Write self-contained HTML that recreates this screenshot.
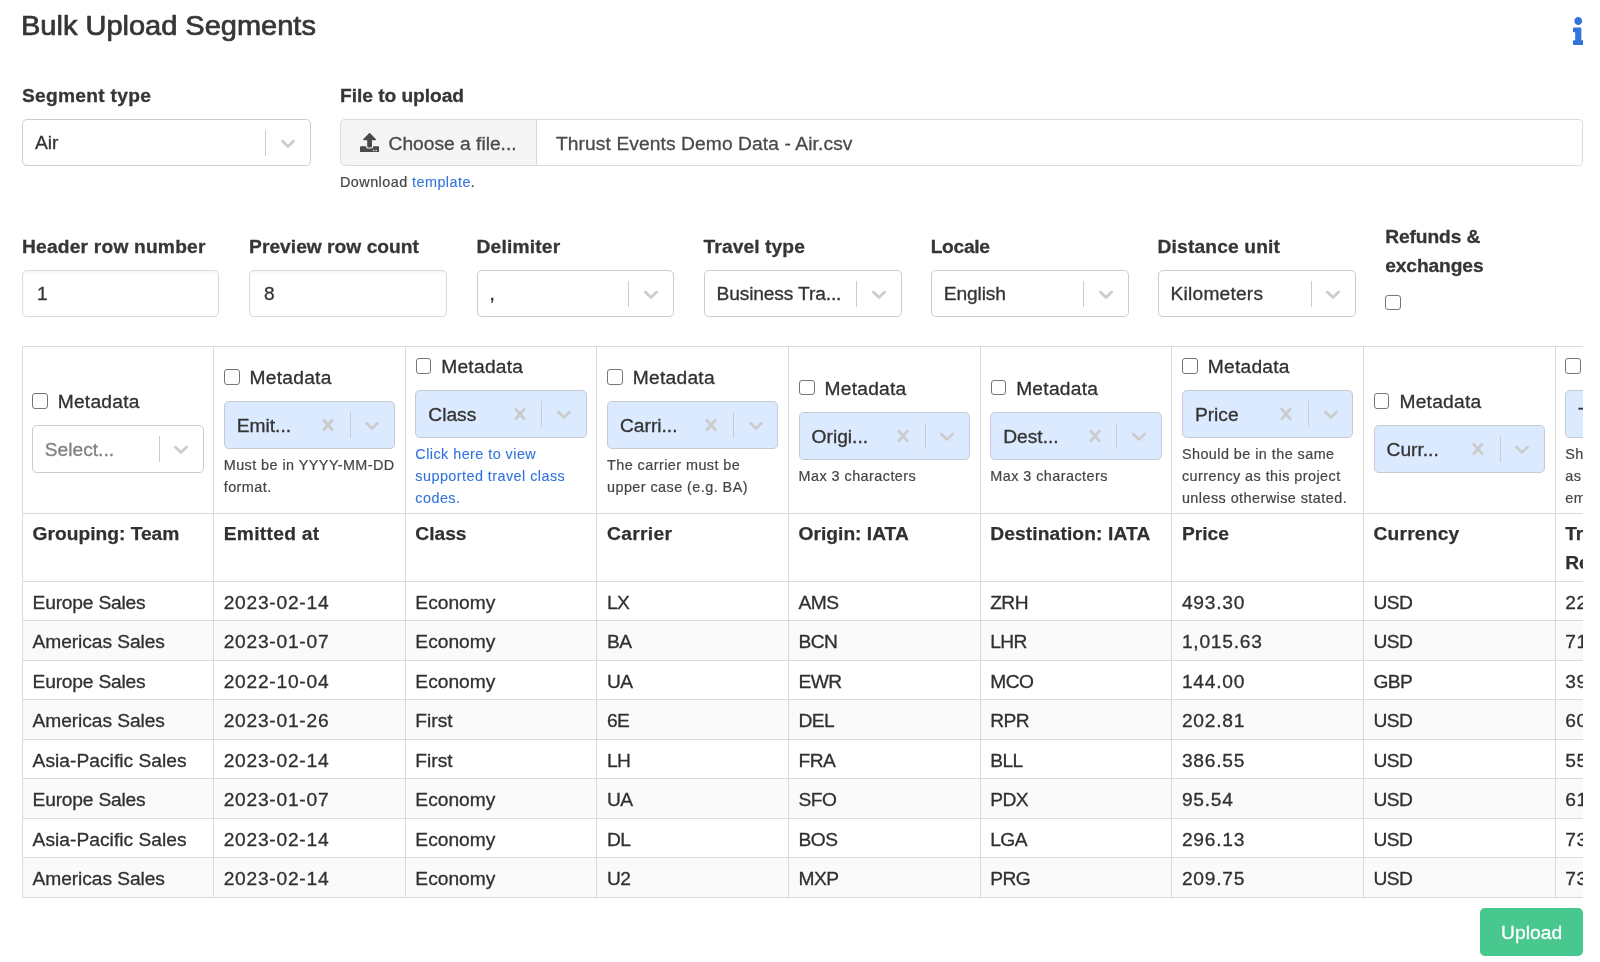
<!DOCTYPE html>
<html lang="en">
<head>
<meta charset="utf-8">
<title>Bulk Upload Segments</title>
<style>
*{box-sizing:border-box;margin:0;padding:0}
html,body{width:1600px;height:962px;overflow:hidden;background:#fff}
body{font-family:"Liberation Sans",Arial,sans-serif;font-size:19.2px;line-height:28.8px;color:#303030;position:relative;-webkit-text-stroke-width:0.3px}
#app{position:absolute;left:0;top:0;width:1600px;height:962px;will-change:transform;background:#fff}
.abs{position:absolute}
h1.title{position:absolute;left:20.9px;top:10.3px;font-size:26.9px;line-height:32.4px;font-weight:400;color:#363636;white-space:nowrap;-webkit-text-stroke:0.7px #363636;transform:scaleX(1.078);transform-origin:0 0}
.info{position:absolute;left:1572.7px;top:17px;width:10.5px;height:28px}
label.lbl{position:absolute;font-weight:700;-webkit-text-stroke:0.3px #363636;color:#363636;white-space:nowrap;line-height:28.8px;letter-spacing:0.1px}
/* react-select-like control */
.sel{position:absolute;height:47px;border:1px solid #ccc;border-radius:4.8px;background:#fff;display:flex;align-items:center}
.sel .val{flex:1;padding-left:12px;position:relative;top:1.3px;white-space:nowrap;overflow:hidden;color:#333}
.sel .ph{color:#808080}
.sel .sep{width:1px;height:26px;background:#ccc;flex:none}
.sel .ind{width:43.2px;height:43.2px;flex:none;display:flex;align-items:center;justify-content:center}
.sel .ind svg{width:24px;height:24px;fill:#ccc;display:block}
.sel.on{background:#dbeafe;border-color:#c6cbd3}
.inp{position:absolute;height:47px;border:1px solid #dbdbdb;border-radius:4.8px;background:#fff;box-shadow:inset 0 1.2px 2.4px rgba(10,10,10,.05);padding-left:14px;line-height:46.2px;color:#363636}
.file{position:absolute;left:340px;top:119px;width:1243.25px;height:47px;display:flex}
.file .cta{width:196.6px;height:47px;background:#f5f5f5;border:1px solid #dbdbdb;border-radius:4.8px 0 0 4.8px;display:flex;align-items:center;padding-left:19.2px;color:#4a4a4a;white-space:nowrap}
.file .cta span{position:relative;top:2px;left:-0.8px}
.file .cta svg{width:19.2px;height:19.2px;fill:#4a4a4a;margin-right:10px;flex:none}
.file .name{flex:1;height:47px;border:1px solid #dbdbdb;border-left:0;border-radius:0 4.8px 4.8px 0;padding-left:19.4px;line-height:47px;letter-spacing:0.1px;color:#4a4a4a;white-space:nowrap}
.help{-webkit-text-stroke-width:0.2px;font-size:14.4px;line-height:21.6px;color:#454545;letter-spacing:0.45px}
a{color:#3273dc;text-decoration:none;-webkit-text-stroke-width:0.1px}
.cb{display:inline-block;width:15.6px;height:15.6px;border:1.2px solid #767676;border-radius:3px;background:#fff;flex:none}
/* table */
.tbl{position:absolute;left:22px;top:346.2px;width:1561.25px;height:553px;overflow:hidden}
.tbl .in{width:1740px;border-left:1px solid #dbdbdb}
.r{display:flex;border-top:1px solid #dbdbdb}
.r:last-child{border-bottom:1px solid #dbdbdb}
.c{width:191.65px;flex:none;border-right:1px solid #dbdbdb;padding:4.8px 9.6px 4.8px 9.6px;white-space:nowrap;overflow:hidden}
.c:first-child{width:191.1px}
.r.h1{height:167px}
.r.h1 .c{display:flex;flex-direction:column;justify-content:center;white-space:normal}
.r.h2{height:67.7px}
.r.h2 .c{font-weight:700;white-space:normal;padding-top:6px;-webkit-text-stroke:0.25px #363636}
.r.d{height:39.53px}
.r.d.s{background:#fafafa}
.r.d .c{padding-top:6.7px;padding-bottom:2.8px}
.r.d:last-child{height:40.53px}
.r.d .c.n{letter-spacing:0.75px}
.r.d .c.k{letter-spacing:-0.6px}
.md{display:flex;align-items:center;height:28.8px;margin-bottom:9.6px;white-space:nowrap}
.md .cb{margin-right:10.4px;position:relative;top:-1px;left:0.3px}
.md span:last-child{position:relative;top:0.3px;left:-0.1px;letter-spacing:0.25px}
.c .sel{position:relative;width:171.3px;height:47.8px;margin-top:-0.8px;flex:none}
.r.h1 .c:first-child{padding-left:8.8px}
.r.h1 .c:first-child .sel{width:172.1px}
.c .help{margin-top:4.8px;position:relative;top:1.5px}
.btn{position:absolute;left:1480.1px;top:908.1px;width:103.15px;letter-spacing:0.1px;height:47.8px;background:#48c78e;border-radius:4.8px;color:#fff;text-align:center;line-height:49.8px}
</style>
</head>
<body>
<div id="app">
<h1 class="title">Bulk Upload Segments</h1>
<svg class="info" viewBox="0 0 192 512"><path fill="#3273dc" d="M20 424.229h20V279.771H20c-11.046 0-20-8.954-20-20V212c0-11.046 8.954-20 20-20h112c11.046 0 20 8.954 20 20v212.229h20c11.046 0 20 8.954 20 20V492c0 11.046-8.954 20-20 20H20c-11.046 0-20-8.954-20-20v-47.771c0-11.046 8.954-20 20-20zM96 0C56.235 0 24 32.235 24 72s32.235 72 72 72 72-32.235 72-72S135.765 0 96 0z"/></svg>

<label class="lbl" style="left:22px;top:81.9px;letter-spacing:0.28px">Segment type</label>
<div class="sel" style="left:22px;top:119px;width:288.6px"><div class="val">Air</div><div class="sep"></div><div class="ind"><svg viewBox="0 0 20 20"><path d="M4.516 7.548c0.436-0.446 1.043-0.481 1.576 0l3.908 3.747 3.908-3.747c0.533-0.481 1.141-0.446 1.574 0 0.436 0.445 0.408 1.197 0 1.615-0.406 0.418-4.695 4.502-4.695 4.502-0.217 0.223-0.502 0.335-0.787 0.335s-0.570-0.112-0.789-0.335c0 0-4.287-4.084-4.695-4.502s-0.436-1.170 0-1.615z"/></svg></div></div>
<label class="lbl" style="left:340px;top:81.9px;letter-spacing:-0.05px">File to upload</label>
<div class="file"><div class="cta"><svg viewBox="0 0 512 512"><path d="M296 384h-80c-13.3 0-24-10.7-24-24V192h-87.7c-17.8 0-26.7-21.5-14.1-34.1L242.3 5.7c7.5-7.5 19.8-7.5 27.300 0l152.2 152.2c12.6 12.6 3.700 34.100-14.100 34.100H320v168c0 13.300-10.700 24-24 24zm216-8v112c0 13.300-10.700 24-24 24H24c-13.300 0-24-10.700-24-24V376c0-13.300 10.700-24 24-24h136v8c0 30.900 25.100 56 56 56h80c30.900 0 56-25.100 56-56v-8h136c13.300 0 24 10.700 24 24zm-124 88c0-11-9-20-20-20s-20 9-20 20 9 20 20 20 20-9 20-20zm64 0c0-11-9-20-20-20s-20 9-20 20 9 20 20 20 20-9 20-20z"/></svg><span>Choose a file...</span></div><div class="name">Thrust Events Demo Data - Air.csv</div></div>
<p class="help abs" style="left:340px;top:172px">Download <a>template</a>.</p>
<label class="lbl" style="left:22.0px;top:233.1px;letter-spacing:0.2px">Header row number</label>
<label class="lbl" style="left:249.1px;top:233.1px;letter-spacing:0.02px">Preview row count</label>
<label class="lbl" style="left:476.5px;top:233.1px;letter-spacing:0.2px">Delimiter</label>
<label class="lbl" style="left:703.6px;top:233.1px;letter-spacing:0.1px">Travel type</label>
<label class="lbl" style="left:930.7px;top:233.1px;letter-spacing:-0.3px">Locale</label>
<label class="lbl" style="left:1157.6px;top:233.1px;letter-spacing:0.15px">Distance unit</label>
<div class="inp" style="left:22.0px;top:270px;width:197.4px">1</div>
<div class="inp" style="left:249.1px;top:270px;width:198.1px">8</div>
<div class="sel" style="left:476.5px;top:270px;width:197.1px"><div class="val">,</div><div class="sep"></div><div class="ind"><svg viewBox="0 0 20 20"><path d="M4.516 7.548c0.436-0.446 1.043-0.481 1.576 0l3.908 3.747 3.908-3.747c0.533-0.481 1.141-0.446 1.574 0 0.436 0.445 0.408 1.197 0 1.615-0.406 0.418-4.695 4.502-4.695 4.502-0.217 0.223-0.502 0.335-0.787 0.335s-0.570-0.112-0.789-0.335c0 0-4.287-4.084-4.695-4.502s-0.436-1.170 0-1.615z"/></svg></div></div>
<div class="sel" style="left:703.6px;top:270px;width:198.0px"><div class="val" style="letter-spacing:-0.15px">Business Tra...</div><div class="sep"></div><div class="ind"><svg viewBox="0 0 20 20"><path d="M4.516 7.548c0.436-0.446 1.043-0.481 1.576 0l3.908 3.747 3.908-3.747c0.533-0.481 1.141-0.446 1.574 0 0.436 0.445 0.408 1.197 0 1.615-0.406 0.418-4.695 4.502-4.695 4.502-0.217 0.223-0.502 0.335-0.787 0.335s-0.570-0.112-0.789-0.335c0 0-4.287-4.084-4.695-4.502s-0.436-1.170 0-1.615z"/></svg></div></div>
<div class="sel" style="left:930.7px;top:270px;width:197.9px"><div class="val" style="letter-spacing:-0.1px">English</div><div class="sep"></div><div class="ind"><svg viewBox="0 0 20 20"><path d="M4.516 7.548c0.436-0.446 1.043-0.481 1.576 0l3.908 3.747 3.908-3.747c0.533-0.481 1.141-0.446 1.574 0 0.436 0.445 0.408 1.197 0 1.615-0.406 0.418-4.695 4.502-4.695 4.502-0.217 0.223-0.502 0.335-0.787 0.335s-0.570-0.112-0.789-0.335c0 0-4.287-4.084-4.695-4.502s-0.436-1.170 0-1.615z"/></svg></div></div>
<div class="sel" style="left:1157.6px;top:270px;width:198.3px"><div class="val" style="letter-spacing:0.2px">Kilometers</div><div class="sep"></div><div class="ind"><svg viewBox="0 0 20 20"><path d="M4.516 7.548c0.436-0.446 1.043-0.481 1.576 0l3.908 3.747 3.908-3.747c0.533-0.481 1.141-0.446 1.574 0 0.436 0.445 0.408 1.197 0 1.615-0.406 0.418-4.695 4.502-4.695 4.502-0.217 0.223-0.502 0.335-0.787 0.335s-0.570-0.112-0.789-0.335c0 0-4.287-4.084-4.695-4.502s-0.436-1.170 0-1.615z"/></svg></div></div>
<label class="lbl" style="left:1385.20px;top:222.9px;white-space:normal;width:180px;letter-spacing:-0.1px">Refunds &amp; exchanges</label>
<span class="cb abs" style="left:1385.20px;top:294.6px"></span>
<div class="tbl"><div class="in">
<div class="r h1">
<div class="c"><div class="md"><span class="cb"></span><span>Metadata</span></div><div class="sel" style=""><div class="val ph">Select...</div><div class="sep"></div><div class="ind"><svg viewBox="0 0 20 20"><path d="M4.516 7.548c0.436-0.446 1.043-0.481 1.576 0l3.908 3.747 3.908-3.747c0.533-0.481 1.141-0.446 1.574 0 0.436 0.445 0.408 1.197 0 1.615-0.406 0.418-4.695 4.502-4.695 4.502-0.217 0.223-0.502 0.335-0.787 0.335s-0.570-0.112-0.789-0.335c0 0-4.287-4.084-4.695-4.502s-0.436-1.170 0-1.615z"/></svg></div></div></div>
<div class="c"><div class="md"><span class="cb"></span><span>Metadata</span></div><div class="sel on" style=""><div class="val">Emit...</div><div class="ind clr"><svg viewBox="0 0 20 20"><path d="M14.348 14.849c-0.469 0.469-1.229 0.469-1.697 0l-2.651-3.030-2.651 3.029c-0.469 0.469-1.229 0.469-1.697 0-0.469-0.469-0.469-1.229 0-1.697l2.758-3.150-2.759-3.152c-0.469-0.469-0.469-1.228 0-1.697s1.228-0.469 1.697 0l2.652 3.031 2.651-3.031c0.469-0.469 1.228-0.469 1.697 0s0.469 1.229 0 1.697l-2.758 3.152 2.758 3.150c0.469 0.469 0.469 1.229 0 1.698z"/></svg></div><div class="sep"></div><div class="ind"><svg viewBox="0 0 20 20"><path d="M4.516 7.548c0.436-0.446 1.043-0.481 1.576 0l3.908 3.747 3.908-3.747c0.533-0.481 1.141-0.446 1.574 0 0.436 0.445 0.408 1.197 0 1.615-0.406 0.418-4.695 4.502-4.695 4.502-0.217 0.223-0.502 0.335-0.787 0.335s-0.570-0.112-0.789-0.335c0 0-4.287-4.084-4.695-4.502s-0.436-1.170 0-1.615z"/></svg></div></div><p class="help">Must be in YYYY-MM-DD format.</p></div>
<div class="c"><div class="md"><span class="cb"></span><span>Metadata</span></div><div class="sel on" style=""><div class="val">Class</div><div class="ind clr"><svg viewBox="0 0 20 20"><path d="M14.348 14.849c-0.469 0.469-1.229 0.469-1.697 0l-2.651-3.030-2.651 3.029c-0.469 0.469-1.229 0.469-1.697 0-0.469-0.469-0.469-1.229 0-1.697l2.758-3.150-2.759-3.152c-0.469-0.469-0.469-1.228 0-1.697s1.228-0.469 1.697 0l2.652 3.031 2.651-3.031c0.469-0.469 1.228-0.469 1.697 0s0.469 1.229 0 1.697l-2.758 3.152 2.758 3.150c0.469 0.469 0.469 1.229 0 1.698z"/></svg></div><div class="sep"></div><div class="ind"><svg viewBox="0 0 20 20"><path d="M4.516 7.548c0.436-0.446 1.043-0.481 1.576 0l3.908 3.747 3.908-3.747c0.533-0.481 1.141-0.446 1.574 0 0.436 0.445 0.408 1.197 0 1.615-0.406 0.418-4.695 4.502-4.695 4.502-0.217 0.223-0.502 0.335-0.787 0.335s-0.570-0.112-0.789-0.335c0 0-4.287-4.084-4.695-4.502s-0.436-1.170 0-1.615z"/></svg></div></div><p class="help"><a>Click here to view supported travel class codes.</a></p></div>
<div class="c"><div class="md"><span class="cb"></span><span>Metadata</span></div><div class="sel on" style=""><div class="val">Carri...</div><div class="ind clr"><svg viewBox="0 0 20 20"><path d="M14.348 14.849c-0.469 0.469-1.229 0.469-1.697 0l-2.651-3.030-2.651 3.029c-0.469 0.469-1.229 0.469-1.697 0-0.469-0.469-0.469-1.229 0-1.697l2.758-3.150-2.759-3.152c-0.469-0.469-0.469-1.228 0-1.697s1.228-0.469 1.697 0l2.652 3.031 2.651-3.031c0.469-0.469 1.228-0.469 1.697 0s0.469 1.229 0 1.697l-2.758 3.152 2.758 3.150c0.469 0.469 0.469 1.229 0 1.698z"/></svg></div><div class="sep"></div><div class="ind"><svg viewBox="0 0 20 20"><path d="M4.516 7.548c0.436-0.446 1.043-0.481 1.576 0l3.908 3.747 3.908-3.747c0.533-0.481 1.141-0.446 1.574 0 0.436 0.445 0.408 1.197 0 1.615-0.406 0.418-4.695 4.502-4.695 4.502-0.217 0.223-0.502 0.335-0.787 0.335s-0.570-0.112-0.789-0.335c0 0-4.287-4.084-4.695-4.502s-0.436-1.170 0-1.615z"/></svg></div></div><p class="help">The carrier must be upper case (e.g. BA)</p></div>
<div class="c"><div class="md"><span class="cb"></span><span>Metadata</span></div><div class="sel on" style=""><div class="val">Origi...</div><div class="ind clr"><svg viewBox="0 0 20 20"><path d="M14.348 14.849c-0.469 0.469-1.229 0.469-1.697 0l-2.651-3.030-2.651 3.029c-0.469 0.469-1.229 0.469-1.697 0-0.469-0.469-0.469-1.229 0-1.697l2.758-3.150-2.759-3.152c-0.469-0.469-0.469-1.228 0-1.697s1.228-0.469 1.697 0l2.652 3.031 2.651-3.031c0.469-0.469 1.228-0.469 1.697 0s0.469 1.229 0 1.697l-2.758 3.152 2.758 3.150c0.469 0.469 0.469 1.229 0 1.698z"/></svg></div><div class="sep"></div><div class="ind"><svg viewBox="0 0 20 20"><path d="M4.516 7.548c0.436-0.446 1.043-0.481 1.576 0l3.908 3.747 3.908-3.747c0.533-0.481 1.141-0.446 1.574 0 0.436 0.445 0.408 1.197 0 1.615-0.406 0.418-4.695 4.502-4.695 4.502-0.217 0.223-0.502 0.335-0.787 0.335s-0.570-0.112-0.789-0.335c0 0-4.287-4.084-4.695-4.502s-0.436-1.170 0-1.615z"/></svg></div></div><p class="help">Max 3 characters</p></div>
<div class="c"><div class="md"><span class="cb"></span><span>Metadata</span></div><div class="sel on" style=""><div class="val">Dest...</div><div class="ind clr"><svg viewBox="0 0 20 20"><path d="M14.348 14.849c-0.469 0.469-1.229 0.469-1.697 0l-2.651-3.030-2.651 3.029c-0.469 0.469-1.229 0.469-1.697 0-0.469-0.469-0.469-1.229 0-1.697l2.758-3.150-2.759-3.152c-0.469-0.469-0.469-1.228 0-1.697s1.228-0.469 1.697 0l2.652 3.031 2.651-3.031c0.469-0.469 1.228-0.469 1.697 0s0.469 1.229 0 1.697l-2.758 3.152 2.758 3.150c0.469 0.469 0.469 1.229 0 1.698z"/></svg></div><div class="sep"></div><div class="ind"><svg viewBox="0 0 20 20"><path d="M4.516 7.548c0.436-0.446 1.043-0.481 1.576 0l3.908 3.747 3.908-3.747c0.533-0.481 1.141-0.446 1.574 0 0.436 0.445 0.408 1.197 0 1.615-0.406 0.418-4.695 4.502-4.695 4.502-0.217 0.223-0.502 0.335-0.787 0.335s-0.570-0.112-0.789-0.335c0 0-4.287-4.084-4.695-4.502s-0.436-1.170 0-1.615z"/></svg></div></div><p class="help">Max 3 characters</p></div>
<div class="c"><div class="md"><span class="cb"></span><span>Metadata</span></div><div class="sel on" style=""><div class="val">Price</div><div class="ind clr"><svg viewBox="0 0 20 20"><path d="M14.348 14.849c-0.469 0.469-1.229 0.469-1.697 0l-2.651-3.030-2.651 3.029c-0.469 0.469-1.229 0.469-1.697 0-0.469-0.469-0.469-1.229 0-1.697l2.758-3.150-2.759-3.152c-0.469-0.469-0.469-1.228 0-1.697s1.228-0.469 1.697 0l2.652 3.031 2.651-3.031c0.469-0.469 1.228-0.469 1.697 0s0.469 1.229 0 1.697l-2.758 3.152 2.758 3.150c0.469 0.469 0.469 1.229 0 1.698z"/></svg></div><div class="sep"></div><div class="ind"><svg viewBox="0 0 20 20"><path d="M4.516 7.548c0.436-0.446 1.043-0.481 1.576 0l3.908 3.747 3.908-3.747c0.533-0.481 1.141-0.446 1.574 0 0.436 0.445 0.408 1.197 0 1.615-0.406 0.418-4.695 4.502-4.695 4.502-0.217 0.223-0.502 0.335-0.787 0.335s-0.570-0.112-0.789-0.335c0 0-4.287-4.084-4.695-4.502s-0.436-1.170 0-1.615z"/></svg></div></div><p class="help">Should be in the same currency as this project unless otherwise stated.</p></div>
<div class="c"><div class="md"><span class="cb"></span><span>Metadata</span></div><div class="sel on" style=""><div class="val">Curr...</div><div class="ind clr"><svg viewBox="0 0 20 20"><path d="M14.348 14.849c-0.469 0.469-1.229 0.469-1.697 0l-2.651-3.030-2.651 3.029c-0.469 0.469-1.229 0.469-1.697 0-0.469-0.469-0.469-1.229 0-1.697l2.758-3.150-2.759-3.152c-0.469-0.469-0.469-1.228 0-1.697s1.228-0.469 1.697 0l2.652 3.031 2.651-3.031c0.469-0.469 1.228-0.469 1.697 0s0.469 1.229 0 1.697l-2.758 3.152 2.758 3.150c0.469 0.469 0.469 1.229 0 1.698z"/></svg></div><div class="sep"></div><div class="ind"><svg viewBox="0 0 20 20"><path d="M4.516 7.548c0.436-0.446 1.043-0.481 1.576 0l3.908 3.747 3.908-3.747c0.533-0.481 1.141-0.446 1.574 0 0.436 0.445 0.408 1.197 0 1.615-0.406 0.418-4.695 4.502-4.695 4.502-0.217 0.223-0.502 0.335-0.787 0.335s-0.570-0.112-0.789-0.335c0 0-4.287-4.084-4.695-4.502s-0.436-1.170 0-1.615z"/></svg></div></div></div>
<div class="c"><div class="md"><span class="cb"></span><span>Metadata</span></div><div class="sel on" style=""><div class="val">Tran...</div><div class="ind clr"><svg viewBox="0 0 20 20"><path d="M14.348 14.849c-0.469 0.469-1.229 0.469-1.697 0l-2.651-3.030-2.651 3.029c-0.469 0.469-1.229 0.469-1.697 0-0.469-0.469-0.469-1.229 0-1.697l2.758-3.150-2.759-3.152c-0.469-0.469-0.469-1.228 0-1.697s1.228-0.469 1.697 0l2.652 3.031 2.651-3.031c0.469-0.469 1.228-0.469 1.697 0s0.469 1.229 0 1.697l-2.758 3.152 2.758 3.150c0.469 0.469 0.469 1.229 0 1.698z"/></svg></div><div class="sep"></div><div class="ind"><svg viewBox="0 0 20 20"><path d="M4.516 7.548c0.436-0.446 1.043-0.481 1.576 0l3.908 3.747 3.908-3.747c0.533-0.481 1.141-0.446 1.574 0 0.436 0.445 0.408 1.197 0 1.615-0.406 0.418-4.695 4.502-4.695 4.502-0.217 0.223-0.502 0.335-0.787 0.335s-0.570-0.112-0.789-0.335c0 0-4.287-4.084-4.695-4.502s-0.436-1.170 0-1.615z"/></svg></div></div><p class="help">Should be the same<br>as the reference of<br>employee booking.</p></div>
</div>
<div class="r h2"><div class="c">Grouping: Team</div><div class="c" style="letter-spacing:0.3px">Emitted at</div><div class="c">Class</div><div class="c" style="letter-spacing:0.35px">Carrier</div><div class="c">Origin: IATA</div><div class="c" style="letter-spacing:0.12px">Destination: IATA</div><div class="c">Price</div><div class="c" style="letter-spacing:0.2px">Currency</div><div class="c">Transaction Reference</div></div>
<div class="r d"><div class="c" style="letter-spacing:-0.2px">Europe Sales</div><div class="c n">2023-02-14</div><div class="c">Economy</div><div class="c k">LX</div><div class="c k">AMS</div><div class="c k">ZRH</div><div class="c n">493.30</div><div class="c k">USD</div><div class="c n">2201</div></div>
<div class="r d s"><div class="c" style="letter-spacing:-0.08px">Americas Sales</div><div class="c n">2023-01-07</div><div class="c">Economy</div><div class="c k">BA</div><div class="c k">BCN</div><div class="c k">LHR</div><div class="c n">1,015.63</div><div class="c k">USD</div><div class="c n">7104</div></div>
<div class="r d"><div class="c" style="letter-spacing:-0.2px">Europe Sales</div><div class="c n">2022-10-04</div><div class="c">Economy</div><div class="c k">UA</div><div class="c k">EWR</div><div class="c k">MCO</div><div class="c n">144.00</div><div class="c k">GBP</div><div class="c n">3902</div></div>
<div class="r d s"><div class="c" style="letter-spacing:-0.08px">Americas Sales</div><div class="c n">2023-01-26</div><div class="c">First</div><div class="c k">6E</div><div class="c k">DEL</div><div class="c k">RPR</div><div class="c n">202.81</div><div class="c k">USD</div><div class="c n">6003</div></div>
<div class="r d"><div class="c" style="letter-spacing:0.03px">Asia-Pacific Sales</div><div class="c n">2023-02-14</div><div class="c">First</div><div class="c k">LH</div><div class="c k">FRA</div><div class="c k">BLL</div><div class="c n">386.55</div><div class="c k">USD</div><div class="c n">5502</div></div>
<div class="r d s"><div class="c" style="letter-spacing:-0.2px">Europe Sales</div><div class="c n">2023-01-07</div><div class="c">Economy</div><div class="c k">UA</div><div class="c k">SFO</div><div class="c k">PDX</div><div class="c n">95.54</div><div class="c k">USD</div><div class="c n">6107</div></div>
<div class="r d"><div class="c" style="letter-spacing:0.03px">Asia-Pacific Sales</div><div class="c n">2023-02-14</div><div class="c">Economy</div><div class="c k">DL</div><div class="c k">BOS</div><div class="c k">LGA</div><div class="c n">296.13</div><div class="c k">USD</div><div class="c n">7306</div></div>
<div class="r d s"><div class="c" style="letter-spacing:-0.08px">Americas Sales</div><div class="c n">2023-02-14</div><div class="c">Economy</div><div class="c k">U2</div><div class="c k">MXP</div><div class="c k">PRG</div><div class="c n">209.75</div><div class="c k">USD</div><div class="c n">7309</div></div>
</div></div>
<div class="btn">Upload</div>
</div>
</body>
</html>
